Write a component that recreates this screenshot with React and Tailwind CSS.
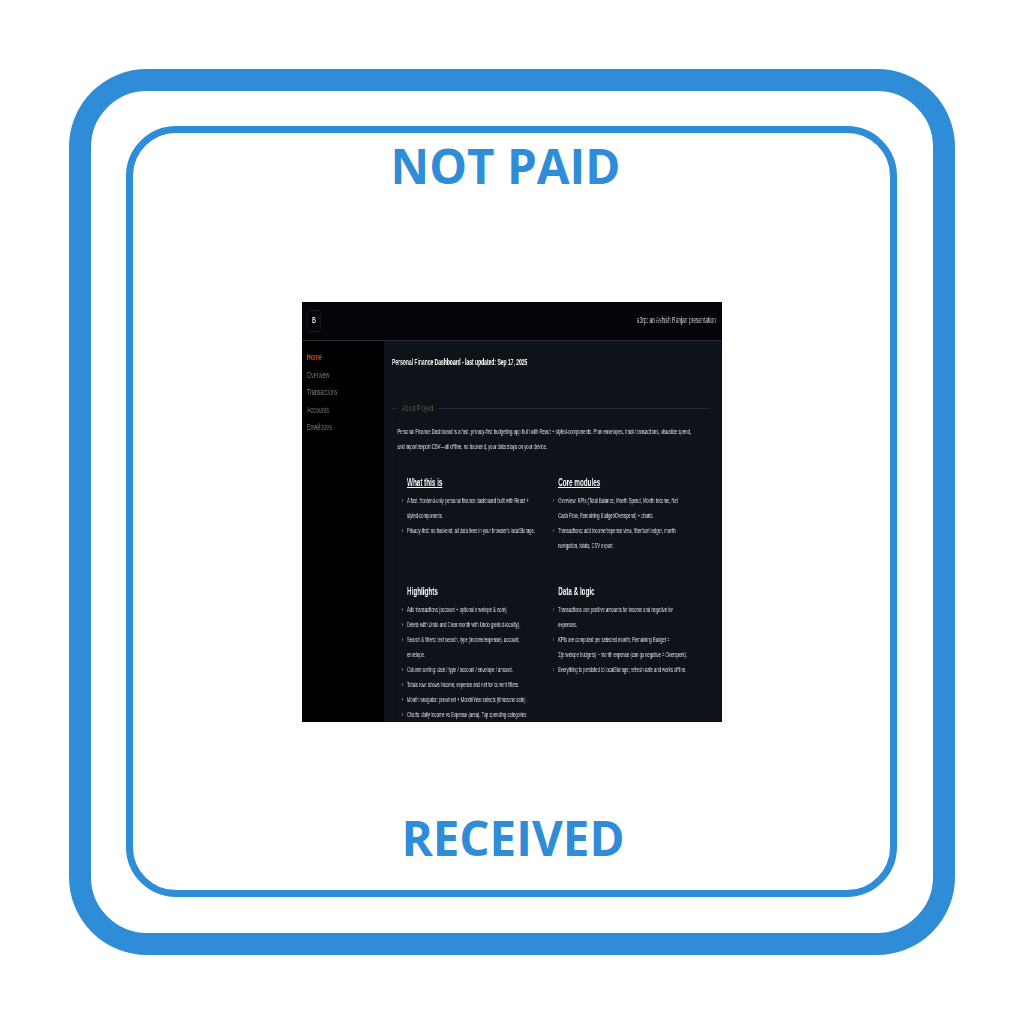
const navItems = ['Overview', 'Transactions', 'Accounts', 'Envelopes'];

const sections = [
  {
    title: 'What this is',
    underline: true,
    items: [
      <>A fast, frontend-only personal finance dashboard built with React + <span className="whitespace-nowrap">styled-components.</span></>,
      "Privacy-first: no backend; all data lives in your browser's localStorage.",
    ],
  },
  {
    title: 'Core modules',
    underline: true,
    items: [
      'Overview: KPIs (Total Balance, Month Spend, Month Income, Net Cash Flow, Remaining Budget/Overspend) + charts.',
      'Transactions: add income/expense view, filter/sort ledger, month navigation, totals, CSV export.',
    ],
  },
  {
    title: 'Highlights',
    items: [
      'Add transactions (account + optional envelope & note).',
      'Delete with Undo and Clear month with Undo (period-locality).',
      'Search & filters: text search, type (income/expense), account, envelope.',
      'Column sorting: date / type / account / envelope / amount.',
      'Totals row: shows income, expense and net for current filters.',
      'Month navigator: prev/next + Month/Year selects (timezone-safe).',
      'Charts: daily Income vs Expense (area), Top spending categories',
    ],
  },
  {
    title: 'Data & logic',
    items: [
      'Transactions use positive amounts for income and negative for expenses.',
      'KPIs are computed per selected month; Remaining Budget = Σ(envelope budgets) − month expense (can go negative = Overspent).',
      'Everything is persisted to localStorage; refresh-safe and works offline.',
    ],
  },
];

function Section({ title, underline, items }) {
  return (
    <div className="pl-[16px]">
      <h3 className={`text-[10.5px] leading-[12px] font-bold text-white mb-[5px] ${underline ? 'underline' : ''}`}>
        {title}
      </h3>
      <ul className="w-[216px]">
        {items.map((item, i) => (
          <li key={i} className="relative text-[6.9px] leading-[15px] text-[#e0e1e3]">
            <span className="absolute left-[-9px] text-[#b0b3b8]">›</span>
            {item}
          </li>
        ))}
      </ul>
    </div>
  );
}

// embedded app screenshot: laid out wide, then squeezed horizontally like the original thumbnail
function Dashboard() {
  return (
    <div className="w-[420px] h-[420px] overflow-hidden bg-[#0e1219]">
      <div className="w-[700px] h-[420px] origin-top-left scale-x-[0.6] will-change-transform font-['Liberation_Sans',sans-serif] flex flex-col">
        <header className="h-[39px] shrink-0 flex items-center justify-between bg-[#03050a] border-b border-[#2a2d33] pl-[9px] pr-[10px]">
          <div className="w-[22px] h-[22px] rounded-[3px] border border-[#1c1f24] flex items-center justify-center text-[9px] font-bold text-[#d8d8d8]">
            B
          </div>
          <span className="text-[8.2px] text-[#d0d2d5]">a3rp: an Ashish Ranjan presentation</span>
        </header>
        <div className="flex flex-1 min-h-0">
          <aside className="w-[137px] shrink-0 bg-black pl-[8px] pt-[8px] text-[9px] leading-[17.5px] text-[#77797d]">
            <div className="text-[#e8481c] font-bold">Home</div>
            {navItems.map((item) => (
              <div key={item}>{item}</div>
            ))}
          </aside>
          <main className="flex-1 min-w-0 pl-[13px] pr-[20px] pt-[15px]">
            <div className="text-[8.3px] leading-[12px] font-bold text-white">
              Personal Finance Dashboard - last updated: Sep 17, 2025
            </div>
            <fieldset className="mt-[35px] h-[400px] border-t border-l border-r border-t-[#272b32] border-l-[#14181e] border-r-[#14181e] pl-[8px] pr-[8px] pt-[12px]">
              <legend className="px-[8px] text-[8.6px] leading-[10px] text-[#6b5d4e]">About Project</legend>
              <p className="text-[7.1px] leading-[15px] text-[#e0e1e3] w-[495px]">
                Personal Finance Dashboard is a fast, privacy-first budgeting app built with React + styled-components. Plan envelopes, track transactions, visualize spend, and import/export CSV—all offline, no backend, your data stays on your device.
              </p>
              <div className="grid grid-cols-[252px_250px] auto-rows-[109px] mt-[21px]">
                {sections.map((section) => (
                  <Section key={section.title} {...section} />
                ))}
              </div>
            </fieldset>
          </main>
        </div>
      </div>
    </div>
  );
}

export default function App() {
  return (
    <div className="w-[1024px] h-[1024px] bg-white pt-[69px] pl-[69px] font-['Open_Sans',sans-serif]">
      <div className="w-[886px] h-[886px] rounded-[78px] border-[22px] border-[#2f8cd6] p-[35px]">
        <div className="w-[771px] h-[771px] rounded-[50px] border-[7px] border-[#2f8cd6] flex flex-col items-center">
          <div className="h-[169px] pt-[2px] pr-[12px] text-[47.5px] leading-[62px] font-bold text-[#2f8cd6]">NOT PAID</div>
          <Dashboard />
          <div className="mt-[85px] pl-[3px] text-[47.5px] leading-[62px] font-bold text-[#2f8cd6]">RECEIVED</div>
        </div>
      </div>
    </div>
  );
}
